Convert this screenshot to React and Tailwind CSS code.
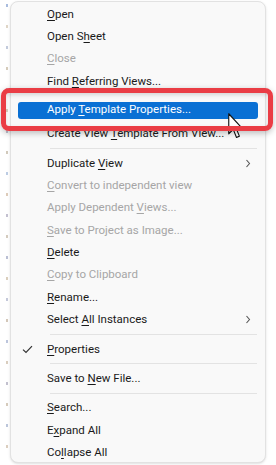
import React from 'react';

// menu rows: [label, underlined index, disabled, submenu, checked, active]
const groups = [
  [
    ['Open', 0],
    ['Open Sheet', 6],
    ['Close', 0, true],
    ['Find Referring Views...', 5],
    ['Apply Template Properties...', 6, false, false, false, true],
    ['Create View Template From View...', 12],
  ],
  [
    ['Duplicate View', 10, false, true],
    ['Convert to independent view', 0, true],
    ['Apply Dependent Views...', 16, true],
    ['Save to Project as Image...', 0, true],
    ['Delete', 0],
    ['Copy to Clipboard', 0, true],
    ['Rename...', 0],
    ['Select All Instances', 7, false, true],
  ],
  [['Properties', 0, false, false, true]],
  [['Save to New File...', 8]],
  [
    ['Search...', 0],
    ['Expand All', 1],
    ['Collapse All', 2],
  ],
];

const Label = ({ text, u }) => (
  <span className="whitespace-nowrap">
    {text.slice(0, u)}
    <span className="underline underline-offset-2 decoration-1">{text[u]}</span>
    {text.slice(u + 1)}
  </span>
);

const Chevron = () => (
  <svg width="6" height="9" viewBox="0 0 6 9" className="ml-auto">
    <path d="M1.5 1 L4.5 4.5 L1.5 8" fill="none" stroke="#555" strokeWidth="1.1" />
  </svg>
);

const Check = () => (
  <svg width="11" height="9" viewBox="0 0 11 9">
    <path d="M1 4.6 L4 7.5 L10 1.2" fill="none" stroke="#333" strokeWidth="1.2" />
  </svg>
);

const Row = ({ item }) => {
  const [text, u, disabled, sub, checked, active] = item;
  if (active) {
    return (
      <div className="h-[30px] pt-[9px] px-[7px]">
        <div className="h-[17px] rounded-[3px] bg-[#0a70d4] flex items-center pl-[29px] text-white">
          <Label text={text} u={u} />
        </div>
      </div>
    );
  }
  return (
    <div
      className={`h-[22.4px] flex items-center pr-[14px] ${
        disabled ? 'text-[#a6a6a6]' : 'text-[#1a1a1a]'
      }`}
    >
      <div className="w-[36px] pl-[11px] flex items-center">{checked && <Check />}</div>
      <Label text={text} u={u} />
      {sub && <Chevron />}
    </div>
  );
};

const Separator = () => (
  <div className="h-[7px] flex items-center pl-[39px] pr-[8px]">
    <div className="h-px w-full bg-[#e3e3e3]" />
  </div>
);

const Cursor = () => (
  <svg
    width="15"
    height="26"
    viewBox="0 0 12 20"
    className="absolute left-[228px] top-[113px]"
    preserveAspectRatio="none"
  >
    <path
      d="M0.6 0.6 L0.6 16 L4.2 12.6 L6.8 18.8 L9.1 17.8 L6.5 11.8 L11.4 11.8 Z"
      fill="#fff"
      stroke="#111"
      strokeWidth="0.9"
      strokeLinejoin="round"
    />
  </svg>
);

export default function App() {
  return (
    <div
      className="relative w-[276px] h-[465px] bg-white flex overflow-hidden text-[11.5px]"
      style={{ fontFamily: 'Roboto, "Noto Sans", sans-serif' }}
    >
      <div className="w-[10px] flex flex-col items-end gap-[18px] pt-[4px] pr-[2px]">
        {['#6f8fc8', '#c9b9a0', '#9aa6c4', '#b9a88c', '#8a9cc0', '#c4b497', '#9a9ab0', '#b3a58d', '#8faad0', '#c7a98a', '#9b96b0', '#b8a992', '#8c94b8', '#c2ad8f', '#9da3c0', '#b5a28a', '#8f9fc4', '#c0ab93', '#9a96ad', '#b9a68e', '#8e9ec2', '#c3ae94'].map((c, i) => (
          <div key={i} className="w-[2px] h-[3px] opacity-60" style={{ backgroundColor: c }} />
        ))}
      </div>

      <div className="w-[256px] h-[462px] mt-[1px] bg-[#f9f9f9] border border-[#e2e2e2] rounded-[8px] pt-[1px] shadow-sm">
        {groups.map((g, gi) => (
          <React.Fragment key={gi}>
            {gi > 0 && <Separator />}
            {g.map((item) => (
              <Row key={item[0]} item={item} />
            ))}
          </React.Fragment>
        ))}
      </div>

      <Cursor />

      <div className="absolute left-[1px] top-[88px] w-[272px] h-[43px] border-[5px] border-[#ea3d45] rounded-[8px] shadow-[0_2px_6px_rgba(0,0,0,0.25),inset_0_2px_4px_rgba(0,0,0,0.15)]" />
    </div>
  );
}
